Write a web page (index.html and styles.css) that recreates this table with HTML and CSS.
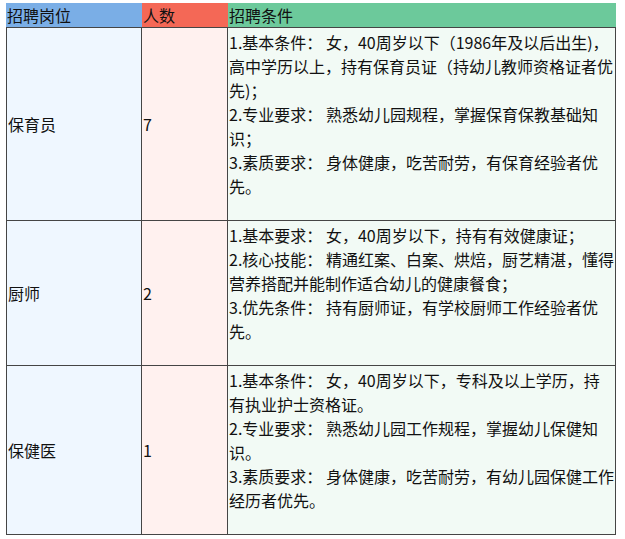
FILE: index.html
```html
<!DOCTYPE html>
<html lang="zh-CN">
<head>
<meta charset="utf-8">
<title>招聘岗位</title>
<link rel="stylesheet" href="styles.css">
</head>
<body>
<table class="jobs">
  <thead>
    <tr>
      <th class="h-post">招聘岗位</th>
      <th class="h-num">人数</th>
      <th class="h-cond">招聘条件</th>
    </tr>
  </thead>
  <tbody>
    <tr>
      <td class="c-post">保育员</td>
      <td class="c-num">7</td>
      <td class="c-cond">1.基本条件： 女，40周岁以下（1986年及以后出生)，高中学历以上，持有保育员证（持幼儿教师资格证者优先)；<br>2.专业要求： 熟悉幼儿园规程，掌握保育保教基础知识；<br>3.素质要求： 身体健康，吃苦耐劳，有保育经验者优先。</td>
    </tr>
    <tr>
      <td class="c-post">厨师</td>
      <td class="c-num">2</td>
      <td class="c-cond">1.基本要求： 女，40周岁以下，持有有效健康证；<br>2.核心技能： 精通红案、白案、烘焙，厨艺精湛，懂得营养搭配并能制作适合幼儿的健康餐食；<br>3.优先条件： 持有厨师证，有学校厨师工作经验者优先。</td>
    </tr>
    <tr>
      <td class="c-post">保健医</td>
      <td class="c-num">1</td>
      <td class="c-cond">1.基本条件： 女，40周岁以下，专科及以上学历，持<br>有执业护士资格证。<br>2.专业要求： 熟悉幼儿园工作规程，掌握幼儿保健知识。<br>3.素质要求： 身体健康，吃苦耐劳，有幼儿园保健工作经历者优先。</td>
    </tr>
  </tbody>
</table>
</body>
</html>
```
FILE: styles.css
```css
html, body {
  margin: 0;
  padding: 0;
  background: #ffffff;
}

body {
  padding: 3px 0 0 6px;
  font-family: "Noto Sans CJK SC", "Noto Sans", sans-serif;
  font-size: 16px;
  color: #111111;
}

.jobs {
  border-collapse: separate;
  border-spacing: 0;
  table-layout: fixed;
  width: 610px;
}

.jobs th,
.jobs td {
  box-sizing: border-box;
}

.jobs th {
  height: 24px;
  padding: 0 0 0 1px;
  line-height: 24px;
  font-weight: normal;
  text-align: left;
  color: #111111;
}

.h-post {
  width: 136px;
  background: #7aaee6;
}

.h-num {
  width: 86px;
  background: #f46856;
}

.h-cond {
  width: 388px;
  background: #6cc99b;
}

.jobs td {
  border-right: 1px solid #454545;
  border-bottom: 1px solid #454545;
  line-height: 24px;
}

.jobs tbody tr:first-child td {
  border-top: 1px solid #454545;
}

.c-post {
  border-left: 1px solid #454545;
  background: #eff7ff;
  padding: 0 0 0 1px;
  vertical-align: middle;
}

.c-num {
  background: #fff1ef;
  padding: 0 0 0 1px;
  vertical-align: middle;
}

.c-cond {
  background: #f2faf5;
  padding: 2px 0 22px 1px;
  vertical-align: top;
}
```
